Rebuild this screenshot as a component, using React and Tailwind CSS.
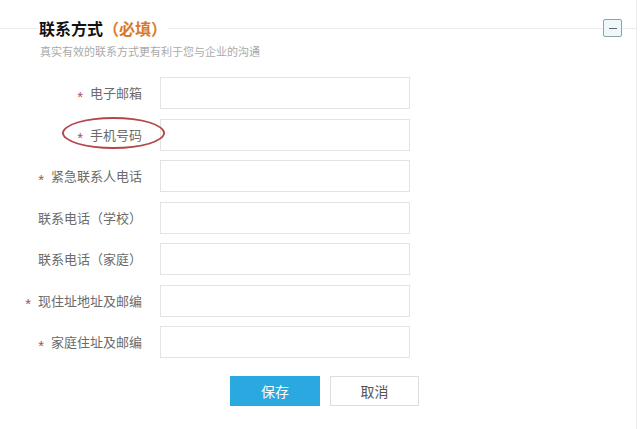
import React from "react";

const fields = [
  { label: "电子邮箱", required: true },
  { label: "手机号码", required: true },
  { label: "紧急联系人电话", required: true },
  { label: "联系电话（学校）", required: false },
  { label: "联系电话（家庭）", required: false },
  { label: "现住址地址及邮编", required: true },
  { label: "家庭住址及邮编", required: true },
];

export default function App() {
  return (
    <div className="relative w-[640px] h-[429px] bg-white overflow-hidden font-['Noto_Sans_CJK_SC','Noto_Sans',sans-serif]">
      <div className="w-[637px] h-full border-r border-[#ececec]">
        {/* Header */}
        <div className="flex items-center pt-[18px] h-[38px]">
          <div className="w-[38px] border-t border-[#ececec]" />
          <h2 className="text-[16px] leading-[20px] font-bold text-[#111] px-[1px]">
            联系方式<span className="text-[#d9792b]">（必填）</span>
          </h2>
          <div className="flex-1 border-t border-[#ececec]" />
          <button className="w-[19px] h-[18px] border border-[#8aa3a8] bg-[#eef7f9] rounded-[2px] flex items-center justify-center">
            <span className="block w-[8px] h-[1px] bg-[#666]" />
          </button>
          <div className="w-[14px] border-t border-[#ececec]" />
        </div>
        <p className="pl-[40px] mt-[6px] text-[11px] leading-[14px] text-[#aaa]">
          真实有效的联系方式更有利于您与企业的沟通
        </p>

        {/* Form */}
        <div className="mt-[19px] flex flex-col gap-[9.5px]">
          {fields.map((f) => (
            <div key={f.label} className="flex items-center">
              <div className="w-[142px] flex items-center justify-end text-[13px] text-[#6b6b6b]">
                {f.required && (
                  <span className="text-[#a5524f] text-[15px] leading-none mr-[7px] translate-y-[3px] font-['Liberation_Sans',sans-serif]">*</span>
                )}
                <span>{f.label}</span>
              </div>
              <input
                className="ml-[18px] w-[250px] h-[32px] border border-[#e3e3e3] bg-white outline-none"
                type="text"
              />
            </div>
          ))}
        </div>

        {/* Buttons */}
        <div className="mt-[18px] pl-[230px] flex gap-[10px]">
          <button className="w-[90px] h-[30px] bg-[#2aa9e0] text-white text-[14px]">
            保存
          </button>
          <button className="w-[89px] h-[30px] border border-[#dedede] bg-white text-[#555] text-[14px]">
            取消
          </button>
        </div>
      </div>

      {/* Annotation */}
      <div className="absolute left-[62px] top-[117px] w-[103px] h-[32px] rounded-[50%] border-2 border-[#b5474a]" />
    </div>
  );
}
